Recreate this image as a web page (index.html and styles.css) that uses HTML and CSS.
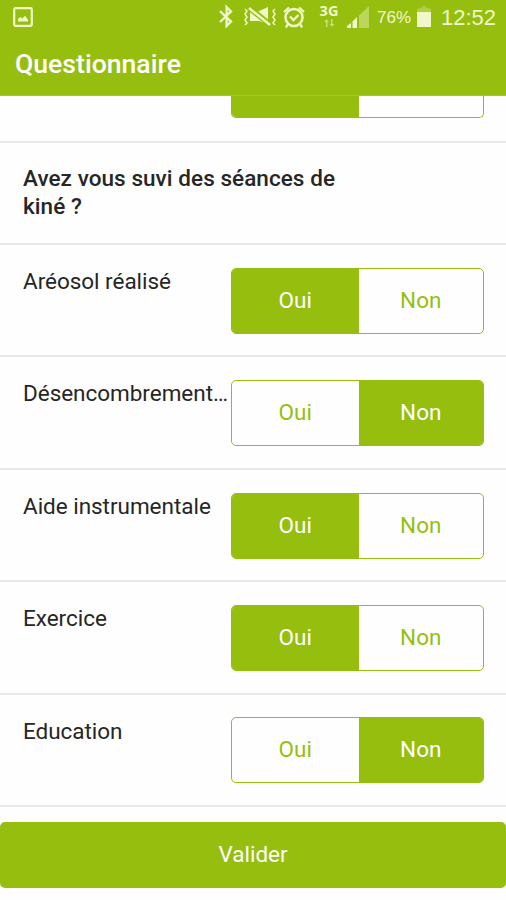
FILE: index.html
```html
<!DOCTYPE html>
<html lang="fr">
<head>
<meta charset="utf-8">
<title>Questionnaire</title>
<link rel="stylesheet" href="styles.css">
</head>
<body>
<header class="top">
  <div class="status">
    <svg class="picture" width="20" height="20" viewBox="0 0 20 20"><rect x="1.2" y="1.2" width="17.6" height="17.6" rx="1.2" fill="none" stroke="currentColor" stroke-width="2.2"/><path d="M5 14.500V12l2.200-2 2 1.600L12 8.800l3 4v1.700z" fill="currentColor"/></svg>
    <svg class="system" width="102" height="34" viewBox="0 0 102 34" fill="none" stroke="currentColor">
      <path d="M3 11.200 14 21.600 9.600 26V7L14 11.400 3 22" stroke-width="2.300"/>
      <path d="m28 9 2 2-2 3 2 3-2 3 2 3-2 2M58 9l-2 2 2 3-2 3 2 3-2 3 2 2" stroke-width="1.500"/>
      <path d="M33 12h7l11-5v17l-9-3h-9z" fill="currentColor" stroke="none"/>
      <path d="m32 10 20 16M34 7l20 16" stroke="#96be0f" stroke-width="2"/>
      <path d="m32 8 21 17" stroke-width="2.300"/>
      <circle cx="77" cy="17.500" r="8.500" stroke-width="2.500"/>
      <path d="m73 16.500 3.500 3.500 5-5M70.500 24.500l-1.500 3M83.500 24.500l1.500 3M67 12l5-4.500M87 12l-5-4.500" stroke-width="2.300"/>
    </svg>
    <div class="network"><span>3G</span><svg width="12" height="8" viewBox="0 0 12 8"><path d="M3 8V3H1l2.500-3L6 3H4.500v5zM8 0v5H6.500L9 8l2.500-3h-2V0z" fill="currentColor" opacity=".55"/></svg></div>
    <svg class="signal" width="23" height="23" viewBox="0 0 23 23" fill="currentColor"><path d="M0 22v-2l4-3v5zM5.500 22v-6.500L10 11v11z"/><path d="M12 22V9.500L22 0v22z" opacity=".42"/></svg>
    <span class="percent">76%</span>
    <svg class="battery" width="14" height="23" viewBox="0 0 14 23" fill="currentColor"><path d="M0 7V4l4-1 3-3 3 3 4 1v3z" opacity=".3"/><path d="M0 7h14v15H0z"/></svg>
    <span class="clock">12:52</span>
  </div>
  <h1>Questionnaire</h1>
</header>
<main class="list">
  <div class="row previous"><div class="choice"><span class="on"></span><span></span></div></div>
  <h2>Avez vous suvi des séances de kiné ?</h2>
  <div class="row"><span class="label">Aréosol réalisé</span><div class="choice"><span class="on">Oui</span><span>Non</span></div></div>
  <div class="row"><span class="label">Désencombrement…</span><div class="choice"><span>Oui</span><span class="on">Non</span></div></div>
  <div class="row"><span class="label">Aide instrumentale</span><div class="choice"><span class="on">Oui</span><span>Non</span></div></div>
  <div class="row"><span class="label">Exercice</span><div class="choice"><span class="on">Oui</span><span>Non</span></div></div>
  <div class="row"><span class="label">Education</span><div class="choice"><span>Oui</span><span class="on">Non</span></div></div>
</main>
<button class="submit">Valider</button>
</body>
</html>
```

FILE: styles.css
```css
* { box-sizing: border-box; }
body {
  margin: 0;
  height: 900px;
  overflow: hidden;
  background: #fefefe;
  color: #262626;
  font: 400 22.5px/28px Roboto, "Liberation Sans", sans-serif;
}
.top {
  height: 96px;
  background: #96be0f;
  color: #fff;
  border-bottom: 1px solid #a3c43c;
}
.status {
  display: flex;
  height: 34px;
  color: #f0f8c9;
}
.picture { margin: 7px 0 0 13px; }
.system { margin-left: 184px; }
.network {
  width: 22px;
  margin: 4px 0 0 -1px;
  display: flex;
  flex-direction: column;
  align-items: center;
  font: 700 14.5px/14px "Open Sans", sans-serif;
}
.network svg { margin-top: 1px; }
.signal { margin: 6px 0 0 7px; }
.percent {
  width: 36px;
  margin: 4px 0 0 7px;
  font: 17px/28px "Liberation Sans", sans-serif;
  white-space: nowrap;
}
.battery { margin: 5px 0 0 4px; }
.clock {
  margin: 4px 0 0 10px;
  font: 22px/28px "Liberation Sans", sans-serif;
}
h1 {
  margin: 0;
  padding: 16px 0 0 15px;
  font-size: 26.6px;
  line-height: 28px;
  font-weight: 500;
}
h2 {
  height: 102.5px;
  margin: 0;
  padding: 21px 150px 0 23px;
  border-bottom: 2px solid #e8e8e8;
  font-size: 22.5px;
  line-height: 28px;
  font-weight: 500;
  letter-spacing: .06px;
}
.row {
  display: flex;
  align-items: flex-start;
  height: 112.45px;
  padding: 22px 22px 0 23px;
  border-bottom: 2px solid #e8e8e8;
}
.previous {
  height: 46.5px;
  padding-top: 0;
  justify-content: flex-end;
}
.label {
  width: 208px;
  flex: none;
  letter-spacing: -.03px;
  white-space: nowrap;
}
.choice {
  display: flex;
  width: 253px;
  height: 66px;
  margin-top: .7px;
  border: 1px solid #96be0f;
  border-radius: 5px;
  overflow: hidden;
  color: #96be0f;
}
.choice span {
  flex: 0 0 126.5px;
  line-height: 63px;
  text-align: center;
}
.choice span + span { flex: 1; }
.choice .on { background: #96be0f; color: #fff; }
.previous .choice {
  height: 22px;
  margin-top: 0;
  border-top: 0;
  border-radius: 0 0 5px 5px;
}
.submit {
  display: block;
  width: 100%;
  height: 66px;
  margin: 14.8px 0 0;
  padding: 0 0 1px;
  border: 0;
  border-radius: 5px;
  background: #96be0f;
  color: #fff;
  font: inherit;
}
```
